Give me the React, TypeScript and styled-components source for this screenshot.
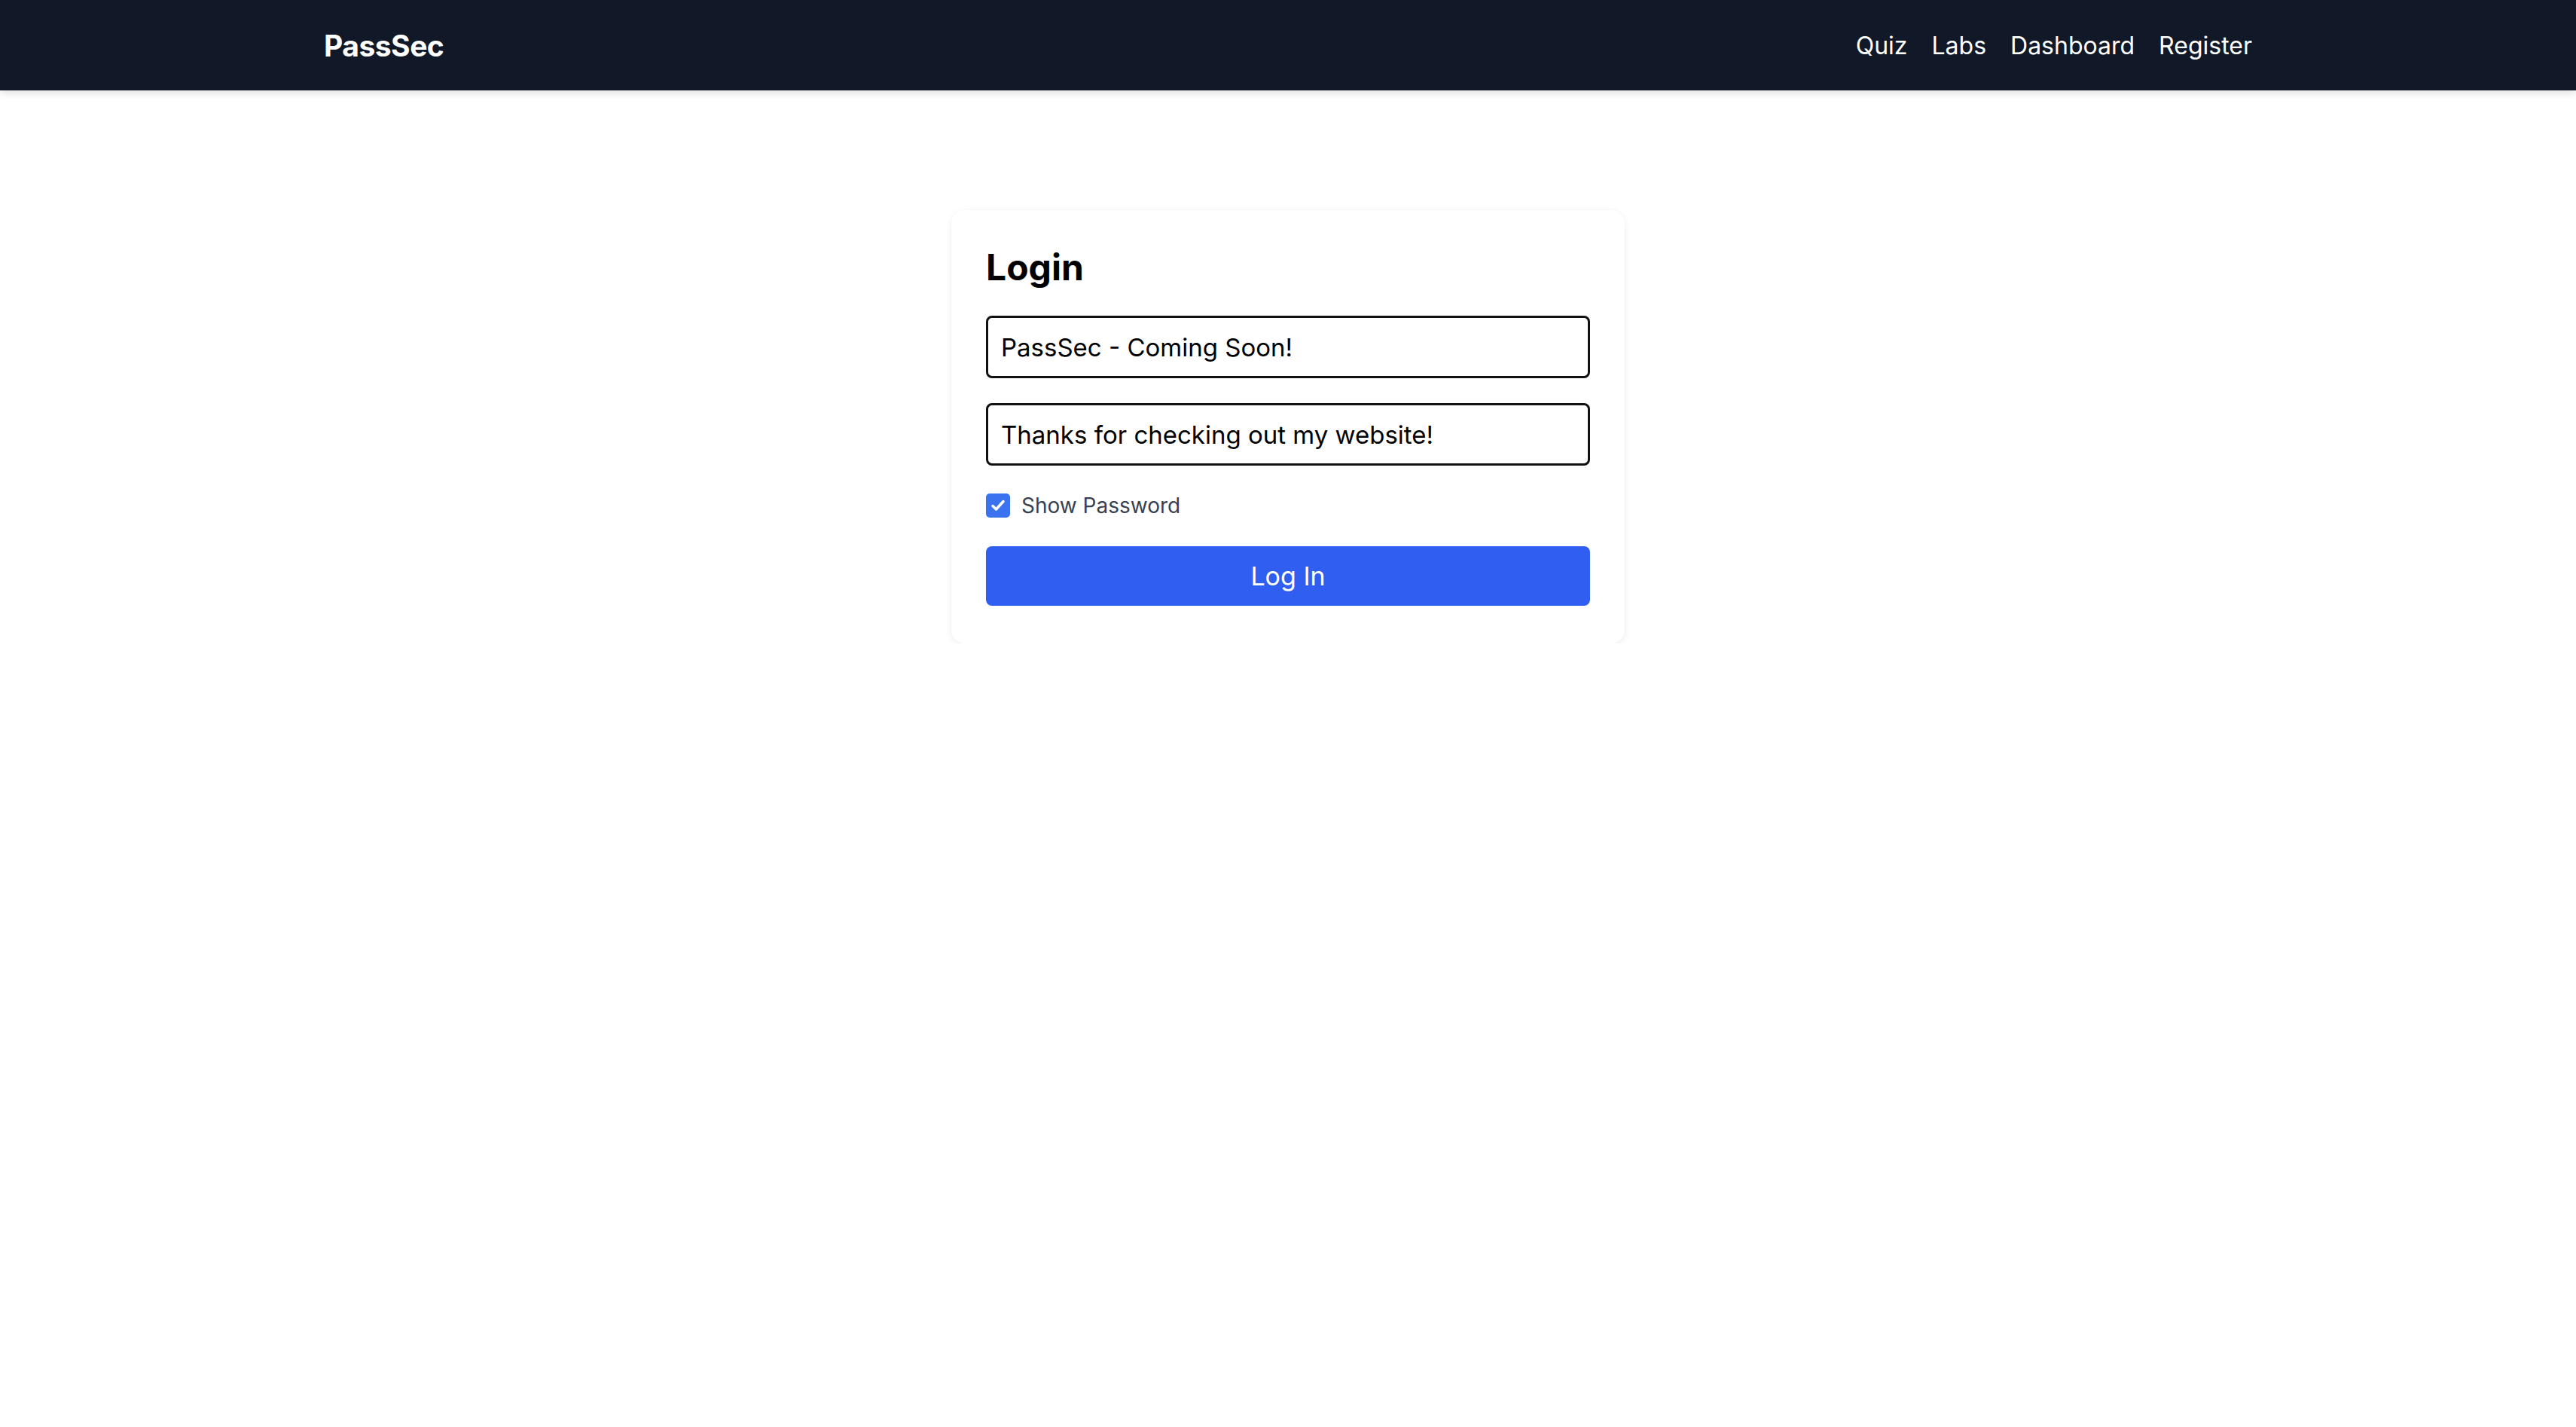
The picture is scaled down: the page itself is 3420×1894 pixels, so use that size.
import React from "react";
import styled, { createGlobalStyle } from "styled-components";

const Global = createGlobalStyle`
  html, body { margin: 0; padding: 0; background: #fff; }
  body { font-family: Inter, "Noto Sans", sans-serif; }
`;

const Header = styled.header`
  height: 120px;
  background: #111827;
  box-shadow: 0 4px 10px rgba(0,0,0,0.12);
`;
const HeaderInner = styled.div`
  max-width: 2560px;
  height: 100%;
  margin: 0 auto;
  display: flex;
  align-items: center;
  justify-content: space-between;
`;
const Brand = styled.div`
  color: #fff;
  font-weight: 700;
  font-size: 39px;
  letter-spacing: -0.5px;
`;
const Nav = styled.nav`
  display: flex;
  gap: 32px;
`;
const NavLink = styled.a`
  color: #fff;
  font-size: 32px;
  text-decoration: none;
`;
const Main = styled.main`
  display: flex;
  justify-content: center;
  padding-top: 159px;
`;
const Card = styled.div`
  width: 894px;
  box-sizing: border-box;
  padding: 46px 46px 50px;
  border-radius: 18px;
  background: #fff;
  box-shadow: 0 2px 8px rgba(0,0,0,0.08);
  display: flex;
  flex-direction: column;
`;
const Title = styled.h2`
  margin: 0 0 34px;
  font-size: 48px;
  font-weight: 700;
  line-height: 60px;
  color: #000;
`;
const Input = styled.input`
  height: 83px;
  box-sizing: border-box;
  border: 3px solid #111;
  border-radius: 8px;
  padding: 0 17px;
  font-family: inherit;
  font-size: 33px;
  color: #000;
  margin-bottom: ${(p: { $mb: number }) => p.$mb}px;
`;
const CheckRow = styled.label`
  display: flex;
  align-items: center;
  gap: 15px;
  font-size: 28px;
  color: #374151;
  margin-bottom: 37px;
`;
const Box = styled.span`
  width: 32px;
  height: 32px;
  border-radius: 5px;
  background: #3b72f0;
  display: flex;
  align-items: center;
  justify-content: center;
`;
const Button = styled.button`
  height: 79px;
  border: none;
  border-radius: 8px;
  background: #2f5ef0;
  color: #fff;
  font-family: inherit;
  font-size: 34px;
`;

export default function App() {
  return (
    <>
      <Global />
      <Header>
        <HeaderInner>
          <Brand>PassSec</Brand>
          <Nav>
            <NavLink>Quiz</NavLink>
            <NavLink>Labs</NavLink>
            <NavLink>Dashboard</NavLink>
            <NavLink>Register</NavLink>
          </Nav>
        </HeaderInner>
      </Header>
      <Main>
        <Card>
          <Title>Login</Title>
          <Input $mb={33} defaultValue="PassSec - Coming Soon!" />
          <Input $mb={36} defaultValue="Thanks for checking out my website!" />
          <CheckRow>
            <Box>
              <svg width="24" height="24" viewBox="0 0 24 24">
                <path d="M5 12.5l4.5 4.5L19 6.5" fill="none" stroke="#fff" strokeWidth="3.5" strokeLinecap="round" strokeLinejoin="round" />
              </svg>
            </Box>
            Show Password
          </CheckRow>
          <Button>Log In</Button>
        </Card>
      </Main>
    </>
  );
}
